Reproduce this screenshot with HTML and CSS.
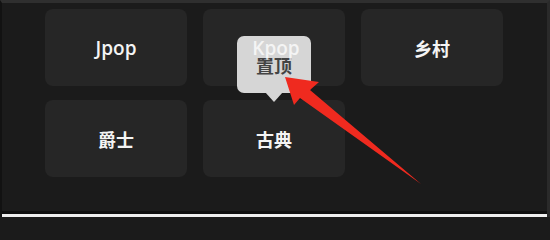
FILE: index.html
```html
<!DOCTYPE html>
<html lang="zh-CN">
<head>
<meta charset="utf-8">
<title>Genres</title>
<link rel="stylesheet" href="styles.css">
</head>
<body>
<div class="screen">
  <div class="grid">
    <div class="tile"><span class="label">Jpop</span></div>
    <div class="tile"><span class="label label-over">Kpop</span></div>
    <div class="tile"><span class="label label-cjk">乡村</span></div>
    <div class="tile"><span class="label label-cjk">爵士</span></div>
    <div class="tile"><span class="label label-cjk">古典</span></div>
  </div>
  <div class="tooltip"><span class="tooltip-text">置顶</span></div>
  <svg class="arrow" width="550" height="217" viewBox="0 0 550 217">
    <polygon points="285,77 319,82 310,90 421,184 300,98 294,105" fill="#ef2a1f"/>
  </svg>
  <div class="bottom-bar"></div>
</div>
</body>
</html>
```
FILE: styles.css
```css
html, body {
  margin: 0;
  padding: 0;
  height: 217px;
  overflow: hidden;
  background: #1b1b1b;
}
.screen {
  position: relative;
  width: 550px;
  height: 217px;
  box-sizing: border-box;
  background: #1b1b1b;
  border-top: 3px solid #2f2f2f;
  border-left: 2px solid #121212;
  border-right: 3px solid #2a2a2a;
  overflow: hidden;
  font-family: "Noto Sans CJK SC", "Noto Sans", sans-serif;
}
.grid {
  display: grid;
  grid-template-columns: repeat(3, 142px);
  grid-template-rows: repeat(2, 77px);
  column-gap: 16px;
  row-gap: 14px;
  padding: 6px 0 0 43px;
}
.tile {
  background: #262626;
  border-radius: 8px;
  display: flex;
  align-items: center;
  justify-content: center;
}
.label {
  color: #f4f4f4;
  font-size: 19px;
  font-weight: 600;
  position: relative;
  font-family: "Open Sans", "Noto Sans CJK SC", sans-serif;
}
.label-cjk {
  font-family: "Noto Sans CJK SC", sans-serif;
  font-size: 18px;
  font-weight: 700;
}
.label-over {
  z-index: 3;
  color: rgba(255, 255, 255, 0.75);
  left: 2px;
}
.tooltip {
  position: absolute;
  left: 235px;
  top: 33px;
  width: 74px;
  height: 57px;
  background: #d6d6d6;
  border-radius: 7px;
  z-index: 2;
  display: flex;
  justify-content: center;
  align-items: flex-end;
  padding-bottom: 19px;
  box-sizing: border-box;
}
.tooltip::after {
  content: "";
  position: absolute;
  left: 28px;
  bottom: -9px;
  border-left: 9px solid transparent;
  border-right: 9px solid transparent;
  border-top: 10px solid #d6d6d6;
}
.tooltip-text {
  color: #444444;
  font-size: 18px;
  font-weight: 700;
  line-height: 18px;
}
.arrow {
  position: absolute;
  left: -2px;
  top: -3px;
  z-index: 4;
}
.bottom-bar {
  position: absolute;
  left: -2px;
  right: -3px;
  bottom: 0;
  height: 6px;
  background: #eeeeee;
  border-top: 3px solid #0f0f0f;
  box-sizing: border-box;
}
```
